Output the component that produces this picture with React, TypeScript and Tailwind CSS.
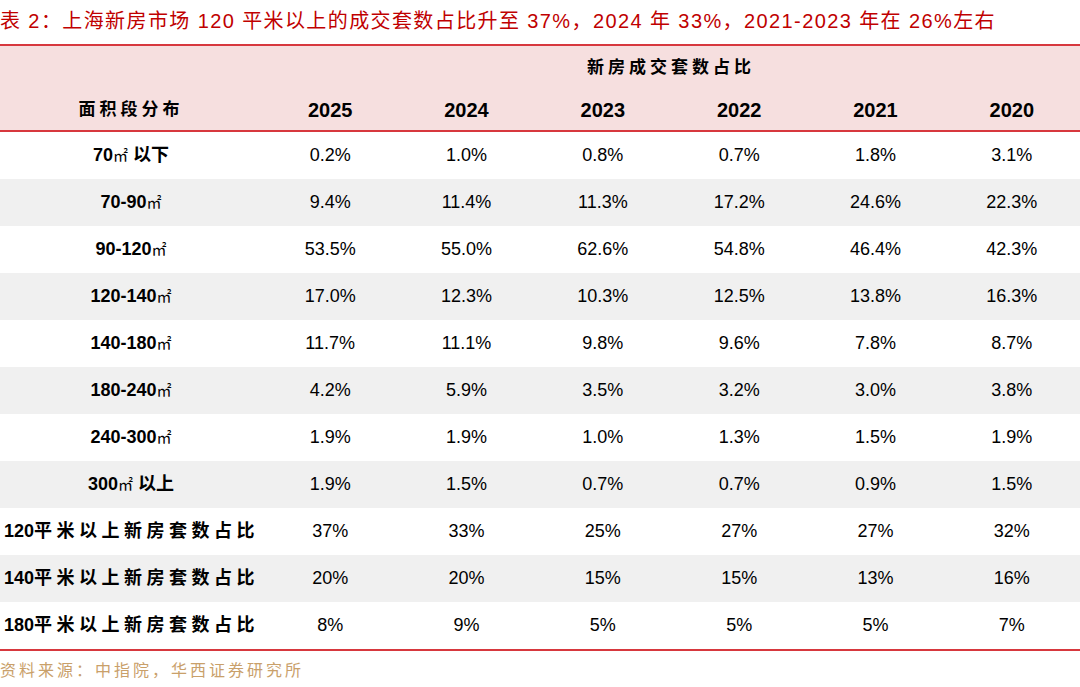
const years = ["2025", "2024", "2023", "2022", "2021", "2020"];

const rows: { label: React.ReactNode; values: string[]; left?: boolean }[] = [
  { label: <>70<M /> 以下</>, values: ["0.2%", "1.0%", "0.8%", "0.7%", "1.8%", "3.1%"] },
  { label: <>70-90<M /></>, values: ["9.4%", "11.4%", "11.3%", "17.2%", "24.6%", "22.3%"] },
  { label: <>90-120<M /></>, values: ["53.5%", "55.0%", "62.6%", "54.8%", "46.4%", "42.3%"] },
  { label: <>120-140<M /></>, values: ["17.0%", "12.3%", "10.3%", "12.5%", "13.8%", "16.3%"] },
  { label: <>140-180<M /></>, values: ["11.7%", "11.1%", "9.8%", "9.6%", "7.8%", "8.7%"] },
  { label: <>180-240<M /></>, values: ["4.2%", "5.9%", "3.5%", "3.2%", "3.0%", "3.8%"] },
  { label: <>240-300<M /></>, values: ["1.9%", "1.9%", "1.0%", "1.3%", "1.5%", "1.9%"] },
  { label: <>300<M /> 以上</>, values: ["1.9%", "1.5%", "0.7%", "0.7%", "0.9%", "1.5%"] },
  { label: <>120<Cn>平米以上新房套数占比</Cn></>, values: ["37%", "33%", "25%", "27%", "27%", "32%"], left: true },
  { label: <>140<Cn>平米以上新房套数占比</Cn></>, values: ["20%", "20%", "15%", "15%", "13%", "16%"], left: true },
  { label: <>180<Cn>平米以上新房套数占比</Cn></>, values: ["8%", "9%", "5%", "5%", "5%", "7%"], left: true },
];

function M() {
  return <span className="font-normal text-[15px]">㎡</span>;
}

function Cn({ children }: { children: React.ReactNode }) {
  return <span className="tracking-[4.5px]">{children}</span>;
}

export default function App() {
  return (
    <div className="w-[1080px] h-[687px] bg-white text-black font-['Liberation_Sans','Noto_Sans_CJK_SC',sans-serif]">
      <div className="h-[44px] pt-[6px] text-[20px] text-[#c00000] tracking-[1.4px] whitespace-nowrap">
        表 2：上海新房市场 120 平米以上的成交套数占比升至 37%，2024 年 33%，2021-2023 年在 26%左右
      </div>
      <div className="border-t-2 border-b-2 border-[#d7383e]">
        <div className="bg-[#f6dfdf] h-[86px] grid grid-cols-[262px_repeat(6,1fr)] grid-rows-[44px_42px] border-b-2 border-[#d7383e]">
          <div className="row-span-2 flex items-end justify-center pb-[10px] text-[17px] font-bold tracking-[4px]">
            面积段分布
          </div>
          <div className="col-span-6 flex items-end justify-center text-[17px] font-bold tracking-[4px] pb-[10px]">
            新房成交套数占比
          </div>
          {years.map((y) => (
            <div key={y} className="flex items-start justify-center text-[20px] font-bold pt-[5px]">
              {y}
            </div>
          ))}
        </div>
        {rows.map((r, i) => (
          <div
            key={i}
            className={`grid grid-cols-[262px_repeat(6,1fr)] h-[47px] items-center ${i % 2 === 1 ? "bg-[#f0f0f0]" : "bg-white"}`}
          >
            <div className={`font-bold text-[18px] whitespace-nowrap ${r.left ? "pl-[4px]" : "text-center"}`}>
              {r.label}
            </div>
            {r.values.map((v, j) => (
              <div key={j} className="text-center text-[18px]">
                {v}
              </div>
            ))}
          </div>
        ))}
      </div>
      <div className="pt-[6px] text-[16px] text-[#c9a06a] tracking-[3px] font-['Noto_Sans_CJK_SC',sans-serif]">
        资料来源：中指院，华西证券研究所
      </div>
    </div>
  );
}
